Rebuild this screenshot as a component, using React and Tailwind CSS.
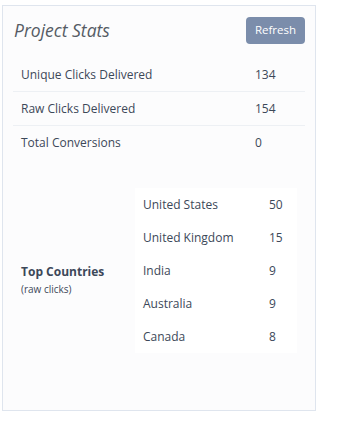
export default function App() {
  const stats = [
    ["Unique Clicks Delivered", "134"],
    ["Raw Clicks Delivered", "154"],
    ["Total Conversions", "0"],
  ];
  const countries = [
    ["United States", "50"],
    ["United Kingdom", "15"],
    ["India", "9"],
    ["Australia", "9"],
    ["Canada", "8"],
  ];
  return (
    <div className="w-[339px] h-[427px] bg-white pt-[5px] pl-[2px]" style={{ fontFamily: '"Open Sans", sans-serif' }}>
      <div className="w-[314px] h-[406px] border border-[#dfe5ee] bg-[#fcfcfd] px-[10px] text-[#3c4859]">
        <div className="flex items-center justify-between h-[52px] pl-[1px] pr-[0px]">
          <h2 className="italic text-[17.5px] text-[#555b64] mt-[-4px]">Project Stats</h2>
          <button className="bg-[#7b8dab] text-white text-[11.5px] rounded-[4px] w-[59px] h-[27px] mt-[-4px]">Refresh</button>
        </div>
        <div>
          {stats.map(([label, value], i) => (
            <div
              key={label}
              className={`flex items-center h-[34px] text-[12px] ${i < 2 ? "border-b border-[#edf0f4]" : ""}`}
            >
              <span className="pl-[8px] w-[242px]">{label}</span>
              <span>{value}</span>
            </div>
          ))}
        </div>
        <div className="flex items-center mt-[28px]">
          <div className="w-[122px] pl-[8px] pt-[21px]">
            <div className="font-bold text-[12px] leading-[16px]">Top Countries</div>
            <div className="text-[10px] leading-[18px]">(raw clicks)</div>
          </div>
          <div className="bg-white w-[162px]">
            {countries.map(([name, n]) => (
              <div key={name} className="flex items-center h-[33px] text-[12px]">
                <span className="pl-[8px] w-[134px]">{name}</span>
                <span>{n}</span>
              </div>
            ))}
          </div>
        </div>
      </div>
    </div>
  );
}
